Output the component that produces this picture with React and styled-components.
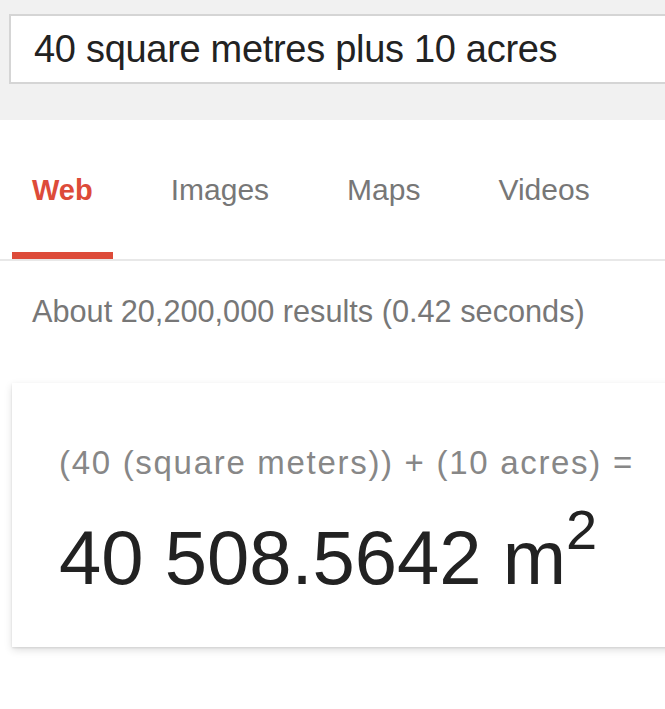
import React from "react";
import styled, { createGlobalStyle } from "styled-components";

const GlobalStyle = createGlobalStyle`
  html, body {
    margin: 0;
    padding: 0;
    background: #ffffff;
    overflow: hidden;
  }
  body {
    font-family: "Liberation Sans", Arial, sans-serif;
  }
`;

const Page = styled.div`
  width: 665px;
  padding-bottom: 40px;
  overflow: hidden;
`;

const Header = styled.header`
  height: 120px;
  background: #f1f1f1;
  padding: 14px 0 0 9px;
  box-sizing: border-box;
`;

const SearchBox = styled.div`
  height: 70px;
  margin-right: -40px;
  box-sizing: border-box;
  background: #ffffff;
  border: 2px solid #d5d5d5;
  padding-left: 23px;
  font-size: 38px;
  letter-spacing: -0.3px;
  line-height: 66px;
  color: #222222;
  white-space: nowrap;
`;

const TabBar = styled.nav`
  display: flex;
  gap: 38px;
  padding-left: 12px;
  border-bottom: 2px solid #e8e8e8;
`;

const Tab = styled.div`
  height: 139px;
  box-sizing: border-box;
  padding: 53px 20px 0;
  font-size: ${(p) => (p.$active ? "29px" : "30px")};
  line-height: 34px;
  font-weight: ${(p) => (p.$active ? 700 : 400)};
  color: ${(p) => (p.$active ? "#dd4b39" : "#777777")};
  border-bottom: 7px solid ${(p) => (p.$active ? "#dd4b39" : "transparent")};
`;

const ResultStats = styled.div`
  padding: 34px 0 0 32px;
  font-size: 30.7px;
  line-height: 34px;
  color: #777777;
  white-space: nowrap;
`;

const Card = styled.section`
  margin: 54px -40px 0 12px;
  height: 264px;
  box-sizing: border-box;
  padding: 61px 0 0 47px;
  background: #ffffff;
  box-shadow: 0 3px 8px rgba(0, 0, 0, 0.13), 0 1px 2px rgba(0, 0, 0, 0.1);
`;

const Formula = styled.div`
  font-size: 33px;
  line-height: 38px;
  letter-spacing: 1.7px;
  color: #878787;
  white-space: nowrap;
`;

const Answer = styled.div`
  margin-top: 33px;
  font-size: 76px;
  line-height: 86px;
  color: #222222;
  white-space: nowrap;
`;

const Sup = styled.sup`
  font-size: 56px;
  vertical-align: 35px;
  line-height: 0;
`;

const tabs = [
  { label: "Web", active: true },
  { label: "Images" },
  { label: "Maps" },
  { label: "Videos" },
];

export default function App() {
  return (
    <Page>
      <GlobalStyle />
      <Header>
        <SearchBox>40 square metres plus 10 acres</SearchBox>
      </Header>
      <TabBar>
        {tabs.map((t) => (
          <Tab key={t.label} $active={t.active}>
            {t.label}
          </Tab>
        ))}
      </TabBar>
      <ResultStats>About 20,200,000 results (0.42 seconds)</ResultStats>
      <Card>
        <Formula>(40 (square meters)) + (10 acres) =</Formula>
        <Answer>
          40 508.5642 m<Sup>2</Sup>
        </Answer>
      </Card>
    </Page>
  );
}
